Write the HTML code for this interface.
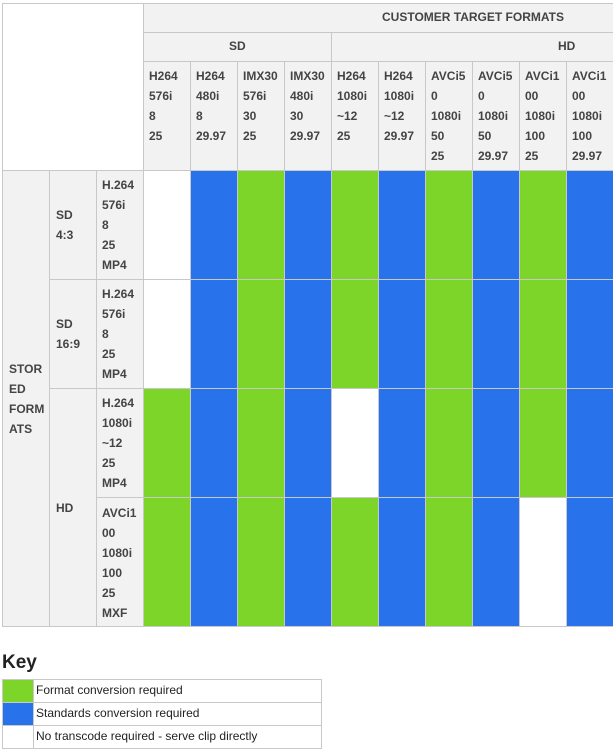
<!DOCTYPE html>
<html><head><meta charset="utf-8"><style>
body{margin:0;width:613px;height:752px;overflow:hidden;background:#fff;font-family:"Liberation Sans",Arial,sans-serif;position:relative}
.c{position:absolute;box-sizing:border-box;border:1px solid #c8c8c8;background:#f2f2f2;color:#444;font-weight:bold;font-size:12px;line-height:20px;padding:4px 0 0 5px}
.w{background:#fff}.g{background:#7ed529}.b{background:#2873eb}
.v{display:flex;align-items:center;padding-top:0}
.t{position:absolute;color:#444;font-weight:bold;font-size:12px}
.k{position:absolute;box-sizing:border-box;border:1px solid #c8c8c8;height:24px;font-size:12px;line-height:21px;color:#222;padding-left:2px}
</style></head><body>
<div class="c w" style="left:2px;top:3px;width:142px;height:168px"></div>
<div class="c" style="left:143px;top:3px;width:480px;height:30px"></div>
<div class="t" style="left:382px;top:10px">CUSTOMER TARGET FORMATS</div>
<div class="c" style="left:143px;top:32px;width:189px;height:30px"></div>
<div class="t" style="left:229px;top:39px">SD</div>
<div class="c" style="left:331px;top:32px;width:292px;height:30px"></div>
<div class="t" style="left:558px;top:39px">HD</div>

<div class="c" style="left:143px;top:61px;width:48px;height:110px">H264<br>576i<br>8<br>25</div>
<div class="c" style="left:190px;top:61px;width:48px;height:110px">H264<br>480i<br>8<br>29.97</div>
<div class="c" style="left:237px;top:61px;width:48px;height:110px">IMX30<br>576i<br>30<br>25</div>
<div class="c" style="left:284px;top:61px;width:48px;height:110px">IMX30<br>480i<br>30<br>29.97</div>
<div class="c" style="left:331px;top:61px;width:48px;height:110px">H264<br>1080i<br>~12<br>25</div>
<div class="c" style="left:378px;top:61px;width:48px;height:110px">H264<br>1080i<br>~12<br>29.97</div>
<div class="c" style="left:425px;top:61px;width:48px;height:110px">AVCi5<br>0<br>1080i<br>50<br>25</div>
<div class="c" style="left:472px;top:61px;width:48px;height:110px">AVCi5<br>0<br>1080i<br>50<br>29.97</div>
<div class="c" style="left:519px;top:61px;width:48px;height:110px">AVCi1<br>00<br>1080i<br>100<br>25</div>
<div class="c" style="left:566px;top:61px;width:60px;height:110px">AVCi1<br>00<br>1080i<br>100<br>29.97</div>

<div class="c v" style="left:2px;top:170px;width:48px;height:457px;padding-left:6px"><div>STOR<br>ED<br>FORM<br>ATS</div></div>
<div class="c v" style="left:49px;top:170px;width:48px;height:110px;padding-left:6px"><div>SD<br>4:3</div></div>
<div class="c v" style="left:49px;top:279px;width:48px;height:110px;padding-left:6px"><div>SD<br>16:9</div></div>
<div class="c v" style="left:49px;top:388px;width:48px;height:239px;padding-left:6px"><div>HD</div></div>
<div class="c" style="left:96px;top:170px;width:48px;height:110px">H.264<br>576i<br>8<br>25<br>MP4</div>
<div class="c" style="left:96px;top:279px;width:48px;height:110px">H.264<br>576i<br>8<br>25<br>MP4</div>
<div class="c" style="left:96px;top:388px;width:48px;height:110px">H.264<br>1080i<br>~12<br>25<br>MP4</div>
<div class="c" style="left:96px;top:497px;width:48px;height:130px;padding-top:5px">AVCi1<br>00<br>1080i<br>100<br>25<br>MXF</div>

<!-- row 1 -->
<div class="c w" style="left:143px;top:170px;width:48px;height:110px"></div>
<div class="c b" style="left:190px;top:170px;width:48px;height:110px"></div>
<div class="c g" style="left:237px;top:170px;width:48px;height:110px"></div>
<div class="c b" style="left:284px;top:170px;width:48px;height:110px"></div>
<div class="c g" style="left:331px;top:170px;width:48px;height:110px"></div>
<div class="c b" style="left:378px;top:170px;width:48px;height:110px"></div>
<div class="c g" style="left:425px;top:170px;width:48px;height:110px"></div>
<div class="c b" style="left:472px;top:170px;width:48px;height:110px"></div>
<div class="c g" style="left:519px;top:170px;width:48px;height:110px"></div>
<div class="c b" style="left:566px;top:170px;width:60px;height:110px"></div>
<!-- row 2 -->
<div class="c w" style="left:143px;top:279px;width:48px;height:110px"></div>
<div class="c b" style="left:190px;top:279px;width:48px;height:110px"></div>
<div class="c g" style="left:237px;top:279px;width:48px;height:110px"></div>
<div class="c b" style="left:284px;top:279px;width:48px;height:110px"></div>
<div class="c g" style="left:331px;top:279px;width:48px;height:110px"></div>
<div class="c b" style="left:378px;top:279px;width:48px;height:110px"></div>
<div class="c g" style="left:425px;top:279px;width:48px;height:110px"></div>
<div class="c b" style="left:472px;top:279px;width:48px;height:110px"></div>
<div class="c g" style="left:519px;top:279px;width:48px;height:110px"></div>
<div class="c b" style="left:566px;top:279px;width:60px;height:110px"></div>
<!-- row 3 -->
<div class="c g" style="left:143px;top:388px;width:48px;height:110px"></div>
<div class="c b" style="left:190px;top:388px;width:48px;height:110px"></div>
<div class="c g" style="left:237px;top:388px;width:48px;height:110px"></div>
<div class="c b" style="left:284px;top:388px;width:48px;height:110px"></div>
<div class="c w" style="left:331px;top:388px;width:48px;height:110px"></div>
<div class="c b" style="left:378px;top:388px;width:48px;height:110px"></div>
<div class="c g" style="left:425px;top:388px;width:48px;height:110px"></div>
<div class="c b" style="left:472px;top:388px;width:48px;height:110px"></div>
<div class="c g" style="left:519px;top:388px;width:48px;height:110px"></div>
<div class="c b" style="left:566px;top:388px;width:60px;height:110px"></div>
<!-- row 4 -->
<div class="c g" style="left:143px;top:497px;width:48px;height:130px"></div>
<div class="c b" style="left:190px;top:497px;width:48px;height:130px"></div>
<div class="c g" style="left:237px;top:497px;width:48px;height:130px"></div>
<div class="c b" style="left:284px;top:497px;width:48px;height:130px"></div>
<div class="c g" style="left:331px;top:497px;width:48px;height:130px"></div>
<div class="c b" style="left:378px;top:497px;width:48px;height:130px"></div>
<div class="c g" style="left:425px;top:497px;width:48px;height:130px"></div>
<div class="c b" style="left:472px;top:497px;width:48px;height:130px"></div>
<div class="c w" style="left:519px;top:497px;width:48px;height:130px"></div>
<div class="c b" style="left:566px;top:497px;width:60px;height:130px"></div>

<div style="position:absolute;left:2px;top:652px;font-size:19px;font-weight:bold;color:#222">Key</div>
<div class="k g" style="left:2px;top:679px;width:32px"></div>
<div class="k" style="left:33px;top:679px;width:289px">Format conversion required</div>
<div class="k b" style="left:2px;top:702px;width:32px"></div>
<div class="k" style="left:33px;top:702px;width:289px">Standards conversion required</div>
<div class="k" style="left:2px;top:725px;width:32px"></div>
<div class="k" style="left:33px;top:725px;width:289px">No transcode required - serve clip directly</div>
</body></html>
